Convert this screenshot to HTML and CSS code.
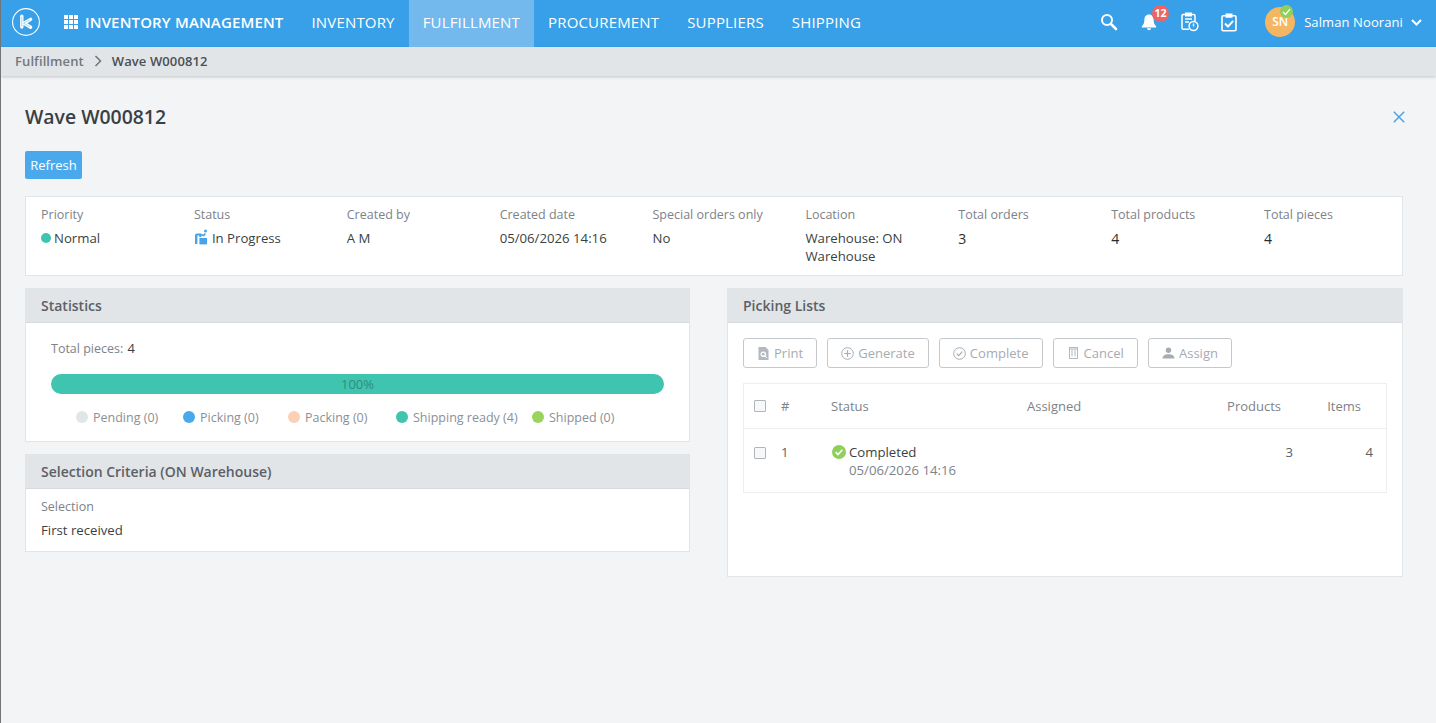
FILE: index.html
```html
<!DOCTYPE html>
<html lang="en">
<head>
  <meta charset="UTF-8" />
  <title>Wave W000812</title>
  <link rel="stylesheet" href="styles.css">
</head>
<body>
  <header class="topbar">
    <div class="brand">
      <svg class="logo" width="30" height="30" viewBox="0 0 30 30" fill="none">
        <circle cx="15" cy="15" r="13.4" stroke="#fff" stroke-width="1.1"/>
        <path d="M10.8 9.2V20M19.6 12.4L13 16.2L19.6 20.2" stroke="#fff" stroke-width="3.4" stroke-linecap="round" stroke-linejoin="round"/>
        <path d="M10.8 9.8V19.4M18.8 12.9L12.6 16.2L18.8 19.7" stroke="#7cc2f1" stroke-width=".7"/>
      </svg>
      <svg class="grid-icon" width="14" height="14" viewBox="0 0 14 14" fill="#fff">
        <rect x="0" y="0" width="4" height="4"/><rect x="5" y="0" width="4" height="4"/><rect x="10" y="0" width="4" height="4"/>
        <rect x="0" y="5" width="4" height="4"/><rect x="5" y="5" width="4" height="4"/><rect x="10" y="5" width="4" height="4"/>
        <rect x="0" y="10" width="4" height="4"/><rect x="5" y="10" width="4" height="4"/><rect x="10" y="10" width="4" height="4"/>
      </svg>
      <span class="brand-name">INVENTORY MANAGEMENT</span>
    </div>
    <nav class="mainnav">
      <a href="#">INVENTORY</a>
      <a href="#" class="active">FULFILLMENT</a>
      <a href="#">PROCUREMENT</a>
      <a href="#">SUPPLIERS</a>
      <a href="#">SHIPPING</a>
    </nav>
    <div class="tools">
      <svg class="tool search" width="18" height="18" viewBox="0 0 18 18" fill="none" stroke="#fff">
        <circle cx="7" cy="7" r="5" stroke-width="2"/>
        <path d="M11 11L16 16" stroke-width="2.6" stroke-linecap="round"/>
      </svg>
      <div class="bell">
        <svg width="16" height="18" viewBox="0 0 16 18" fill="#fff">
          <path d="M8 1.5C4.8 1.5 3.4 3.9 3.4 6.6C3.4 10.2 2.4 11.8 .8 13.4V14.4H15.2V13.4C13.6 11.8 12.6 10.2 12.6 6.6C12.6 3.9 11.2 1.5 8 1.5Z"/>
          <path d="M6 15.2H10C10 16.4 9.1 17.2 8 17.2C6.9 17.2 6 16.4 6 15.2Z"/>
        </svg>
        <span class="badge">12</span>
      </div>
      <svg class="tool clip-time" width="18" height="20" viewBox="0 0 18 20" fill="none" stroke="#fff" stroke-width="1.5">
        <path d="M8 17.2H2.2C1.5 17.2 1 16.7 1 16V3.8C1 3.1 1.5 2.6 2.2 2.6H12.8C13.5 2.6 14 3.1 14 3.8V9"/>
        <rect x="4.5" y="1" width="6" height="3" fill="#fff" stroke-width="1"/>
        <path d="M4 7H11M4 10H8" stroke-width="1.4"/>
        <circle cx="12.5" cy="14" r="4.4" fill="#38a0e8"/>
        <path d="M12.5 11.5V14.5" stroke-width="1.4"/>
      </svg>
      <svg class="tool clip-check" width="16" height="19" viewBox="0 0 16 19" fill="none" stroke="#fff" stroke-width="1.6">
        <rect x="1" y="2.8" width="14" height="15" rx="1.2"/>
        <rect x="5" y="1" width="6" height="3.2" fill="#fff" stroke-width="1"/>
        <path d="M4 10.5L7 13.5L12.2 7.8" stroke-width="1.9"/>
      </svg>
      <div class="avatar">SN
        <span class="avatar-ok">
          <svg width="9" height="8" viewBox="0 0 9 8" fill="none" stroke="#fff" stroke-width="1.2"><path d="M1 4L3.5 6.5L8 1.2"/></svg>
        </span>
      </div>
      <span class="user-name">Salman Noorani</span>
      <svg class="caret" width="11" height="7" viewBox="0 0 11 7" fill="none" stroke="#fff" stroke-width="2"><path d="M1 1L5.5 5.5L10 1"/></svg>
    </div>
  </header>

  <div class="crumbs">
    <a href="#">Fulfillment</a>
    <svg width="8" height="12" viewBox="0 0 8 12" fill="none" stroke="#6f7479" stroke-width="1.5"><path d="M1.5 1L6.5 6L1.5 11"/></svg>
    <span>Wave W000812</span>
  </div>

  <main class="page">
    <div class="title-row">
      <h1>Wave W000812</h1>
      <svg class="close" width="12" height="12" viewBox="0 0 12 12" fill="none" stroke="#4aa3e8" stroke-width="1.5"><path d="M.8 .8L11.2 11.2M11.2 .8L.8 11.2"/></svg>
    </div>
    <button class="btn-refresh">Refresh</button>

    <section class="summary">
      <div class="field"><label>Priority</label><div class="val"><i class="dot teal"></i>Normal</div></div>
      <div class="field"><label>Status</label><div class="val">
        <svg class="pick-icon" width="14" height="16" viewBox="0 0 14 16" fill="#4aa3e8">
          <circle cx="11.5" cy="2" r="1.5"/>
          <path d="M1 15V6.5C1 5.2 1.8 4.4 3 4.4H6.5L9.5 5.6L10.8 4L12 5L10 7.6L7.4 6.6V8H5.2V6.4H3.4V15Z"/>
          <rect x="5.4" y="9" width="7.6" height="6.4"/>
        </svg>In Progress</div></div>
      <div class="field"><label>Created by</label><div class="val">A M</div></div>
      <div class="field"><label>Created date</label><div class="val">05/06/2026 14:16</div></div>
      <div class="field"><label>Special orders only</label><div class="val">No</div></div>
      <div class="field"><label>Location</label><div class="val">Warehouse: ON Warehouse</div></div>
      <div class="field"><label>Total orders</label><div class="val num">3</div></div>
      <div class="field"><label>Total products</label><div class="val num">4</div></div>
      <div class="field"><label>Total pieces</label><div class="val num">4</div></div>
    </section>

    <div class="columns">
      <div class="col-left">
        <section class="panel">
          <h2>Statistics</h2>
          <div class="stats-body">
            <div class="total-line">Total pieces: <span>4</span></div>
            <div class="progress">100%</div>
            <ul class="legend">
              <li class="l-pending"><i class="dot grey"></i>Pending (0)</li>
              <li class="l-picking"><i class="dot blue"></i>Picking (0)</li>
              <li class="l-packing"><i class="dot peach"></i>Packing (0)</li>
              <li class="l-ready"><i class="dot teal"></i>Shipping ready (4)</li>
              <li class="l-shipped"><i class="dot green"></i>Shipped (0)</li>
            </ul>
          </div>
        </section>
        <section class="panel">
          <h2>Selection Criteria (ON Warehouse)</h2>
          <div class="criteria-body">
            <label>Selection</label>
            <div class="val">First received</div>
          </div>
        </section>
      </div>

      <section class="panel picking">
        <h2>Picking Lists</h2>
        <div class="picking-body">
          <div class="actions">
            <button class="btn-act">
              <svg width="13" height="13" viewBox="0 0 13 13" fill="#b3b9bf"><path d="M1.5 0H8.5L11.5 3V13H1.5Z"/><circle cx="6.3" cy="7.2" r="2.8" fill="#fff"/><circle cx="6.3" cy="7.2" r="1.4"/><path d="M8 9L10 11" stroke="#fff" stroke-width="1"/></svg>
              Print</button>
            <button class="btn-act">
              <svg width="13" height="13" viewBox="0 0 13 13" fill="none" stroke="#a6acb2" stroke-width="1"><circle cx="6.5" cy="6.5" r="5.8"/><path d="M6.5 3.2V9.8M3.2 6.5H9.8" stroke-width="1.2"/></svg>
              Generate</button>
            <button class="btn-act">
              <svg width="13" height="13" viewBox="0 0 13 13" fill="none" stroke="#a6acb2" stroke-width="1"><circle cx="6.5" cy="6.5" r="5.8"/><path d="M3.8 6.6L5.8 8.6L9.3 4.7" stroke-width="1.2"/></svg>
              Complete</button>
            <button class="btn-act">
              <svg width="13" height="12" viewBox="0 0 13 12" fill="none" stroke="#b3b9bf" stroke-width="1"><rect x="2.5" y=".5" width="8" height="11"/><path d="M5 2.5V9.5M8 2.5V9.5M2.5 2H10.5"/></svg>
              Cancel</button>
            <button class="btn-act">
              <svg width="13" height="12" viewBox="0 0 13 12" fill="#a6acb2"><circle cx="6.5" cy="3.2" r="2.7"/><path d="M.5 11.5C.5 8.6 3 7.2 6.5 7.2C10 7.2 12.5 8.6 12.5 11.5Z"/></svg>
              Assign</button>
          </div>
          <div class="list">
            <div class="list-row list-head">
              <span class="c-check"><i class="check"></i></span>
              <span class="c-num">#</span>
              <span class="c-status">Status</span>
              <span class="c-assigned">Assigned</span>
              <span class="c-products">Products</span>
              <span class="c-items">Items</span>
            </div>
            <div class="list-row list-item">
              <span class="c-check"><i class="check"></i></span>
              <span class="c-num">1</span>
              <div class="c-status">
                <div class="done">
                  <svg width="14" height="14" viewBox="0 0 14 14"><circle cx="7" cy="7" r="7" fill="#8fd05a"/><path d="M3.6 7.2L6 9.5L10.4 4.8" fill="none" stroke="#fff" stroke-width="1.6"/></svg>
                  Completed
                </div>
                <div class="done-date">05/06/2026 14:16</div>
              </div>
              <span class="c-assigned"></span>
              <span class="c-products">3</span>
              <span class="c-items">4</span>
            </div>
          </div>
        </div>
      </section>
    </div>
  </main>
</body>
</html>
```

FILE: styles.css
```css
* { box-sizing: border-box; }
html, body { height: 100%; margin: 0; }
body {
  font-family: "Open Sans", "Liberation Sans", sans-serif;
  font-size: 13.2px;
  color: #3a3f44;
  background: #f3f4f6;
  border-left: 1px solid #70757a;
  overflow: hidden;
}
a { text-decoration: none; color: inherit; }
label { color: #7d8389; display: block; font-size: 12.5px; }

/* top bar */
.topbar {
  display: flex;
  align-items: center;
  height: 47px;
  background: #38a0e8;
  color: #fff;
}
.brand {
  display: flex;
  align-items: center;
  padding: 0 0 3px 10px;
}
.grid-icon { margin-left: 23px; }
.brand-name {
  margin-left: 7px;
  font-size: 15px;
  font-weight: 600;
  letter-spacing: .15px;
  white-space: nowrap;
}
.mainnav {
  display: flex;
  align-self: stretch;
  margin-left: 14px;
}
.mainnav a {
  display: flex;
  align-items: center;
  padding: 0 14px 4px;
  font-size: 15px;
  letter-spacing: .17px;
}
.mainnav a.active { background: #73b9ee; }
.tools {
  display: flex;
  align-items: center;
  margin-left: auto;
  padding: 0 14px 3px 0;
}
.bell {
  position: relative;
  display: flex;
  margin-left: 23px;
}
.badge {
  position: absolute;
  top: -8px;
  left: 11px;
  width: 17px;
  height: 17px;
  border-radius: 50%;
  background: #ec6464;
  font-size: 10.5px;
  font-weight: 700;
  line-height: 17px;
  text-align: center;
}
.clip-time { margin-left: 24px; }
.clip-check { margin-left: 22px; }
.avatar {
  position: relative;
  width: 30px;
  height: 30px;
  margin-left: 28px;
  border-radius: 50%;
  background: #f5b661;
  font-size: 12px;
  font-weight: 600;
  line-height: 30px;
  text-align: center;
}
.avatar-ok {
  position: absolute;
  top: -2px;
  right: 2px;
  display: flex;
  align-items: center;
  justify-content: center;
  width: 13px;
  height: 13px;
  border-radius: 50%;
  background: #8fd05a;
}
.user-name { margin-left: 9px; font-size: 13px; letter-spacing: .1px; }
.caret { margin-left: 8px; }

/* breadcrumb */
.crumbs {
  display: flex;
  align-items: center;
  gap: 10px;
  height: 29px;
  padding: 0 0 2px 14px;
  background: #e2e5e8;
  box-shadow: 0 1px 3px rgba(0,0,0,0.2);
  font-size: 13px;
  font-weight: 600;
  letter-spacing: .1px;
}
.crumbs a { color: #73787d; }
.crumbs span { color: #4a4f54; }

.page { padding: 0 33px 0 24px; }
.title-row {
  display: flex;
  align-items: center;
  justify-content: space-between;
  padding-top: 27px;
}
.title-row h1 {
  margin: 0;
  font-size: 19.4px;
  font-weight: 600;
  line-height: 28px;
  color: #3a3f44;
}
.close { margin-right: -2px; }
.btn-refresh {
  display: block;
  width: 57px;
  height: 28px;
  margin-top: 20px;
  padding: 0;
  border: none;
  border-radius: 2px;
  background: #4aa9ec;
  color: #fff;
  font: inherit;
  font-size: 13px;
}

/* summary strip */
.summary {
  display: grid;
  grid-template-columns: repeat(9, 152.875px);
  height: 80px;
  margin-top: 17px;
  padding: 9px 0 0 15px;
  background: #fff;
  border: 1px solid #e2e5e8;
}
.field label { line-height: 18px; }
.val { color: #3a3f44; line-height: 18px; }
.field .val { margin-top: 5px; padding-right: 30px; }
.field .val.num { padding-top: 1px; font-size: 14px; font-weight: 500; color: #2a2d30; }
.dot {
  display: inline-block;
  width: 10px;
  height: 10px;
  border-radius: 50%;
}
.field .dot { margin-right: 3px; }
.pick-icon { margin-right: 4px; vertical-align: -2px; }
.teal { background: #3fc4b0; }
.grey { background: #e2e5e8; }
.blue { background: #4aa9ec; }
.peach { background: #fbd0b5; }
.green { background: #9ad45e; }

/* panels */
.columns {
  display: flex;
  align-items: flex-start;
  justify-content: space-between;
  margin-top: 12px;
}
.col-left {
  display: flex;
  flex-direction: column;
  gap: 12px;
  width: 665px;
}
.panel {
  background: #fff;
  border: 1px solid #e2e5e8;
}
.panel h2 {
  margin: 0;
  padding: 0 15px;
  font-size: 14px;
  font-weight: 600;
  line-height: 33px;
  color: #5b6066;
  background: #e2e5e8;
  border-bottom: 1px solid #d6dade;
}
.stats-body { height: 118px; padding: 16px 25px 0; }
.total-line { color: #7d8389; font-size: 12.5px; line-height: 18px; }
.total-line span { color: #3a3f44; font-size: 13px; margin-left: 1px; }
.progress {
  height: 20px;
  margin-top: 16px;
  border-radius: 10px;
  background: #3fc4b0;
  color: #2f8c80;
  font-size: 13px;
  line-height: 20px;
  text-align: center;
}
.legend {
  display: flex;
  margin: 0;
  padding: 15px 0 0 25px;
  list-style: none;
  color: #8b9096;
  font-size: 12.5px;
  line-height: 18px;
  white-space: nowrap;
}
.legend .dot { margin-right: 5px; width: 12px; height: 12px; vertical-align: -1px; }
.l-pending { width: 107px; }
.l-picking { width: 105px; }
.l-packing { width: 108px; }
.l-ready { width: 136px; }
.criteria-body { height: 62px; padding: 9px 15px 0; }
.criteria-body .val { margin-top: 6px; }

/* picking lists */
.picking { width: 676px; }
.picking-body { height: 253px; padding: 15px; }
.actions { display: flex; gap: 10px; }
.btn-act {
  display: flex;
  align-items: center;
  gap: 4px;
  height: 30px;
  padding: 0 13px;
  background: #fff;
  border: 1px solid #c4c9ce;
  border-radius: 3px;
  color: #a6acb2;
  font: inherit;
  font-size: 13.05px;
}
.list {
  margin-top: 15px;
  border: 1px solid #eceef0;
}
.list-row { display: flex; }
.list-head {
  align-items: center;
  height: 45px;
  border-bottom: 1px solid #eceef0;
  color: #7d8389;
  font-size: 13px;
}
.list-item { height: 63px; padding-top: 14px; }
.c-check { width: 37px; padding-left: 10px; }
.check {
  display: block;
  width: 12px;
  height: 12px;
  background: #f7f8f8;
  border: 1.5px solid #b0b5ba;
  border-radius: 1px;
}
.list-item .check { margin-top: 4px; }
.c-num { width: 50px; }
.list-item .c-num { color: #5b6066; }
.c-status { width: 196px; }
.c-assigned { width: 165px; }
.c-products { width: 101px; text-align: right; }
.c-items { width: 80px; text-align: right; }
.list-head .c-products { padding-right: 12px; }
.list-head .c-items { padding-right: 12px; }
.list-item .c-items { color: #5b6066; }
.list-item .c-products { color: #5b6066; }
.done { display: flex; align-items: center; gap: 3px; color: #3a3f44; line-height: 18px; margin-left: 1px; }
.done-date { color: #7d8389; line-height: 18px; margin-left: 18px; }
```
